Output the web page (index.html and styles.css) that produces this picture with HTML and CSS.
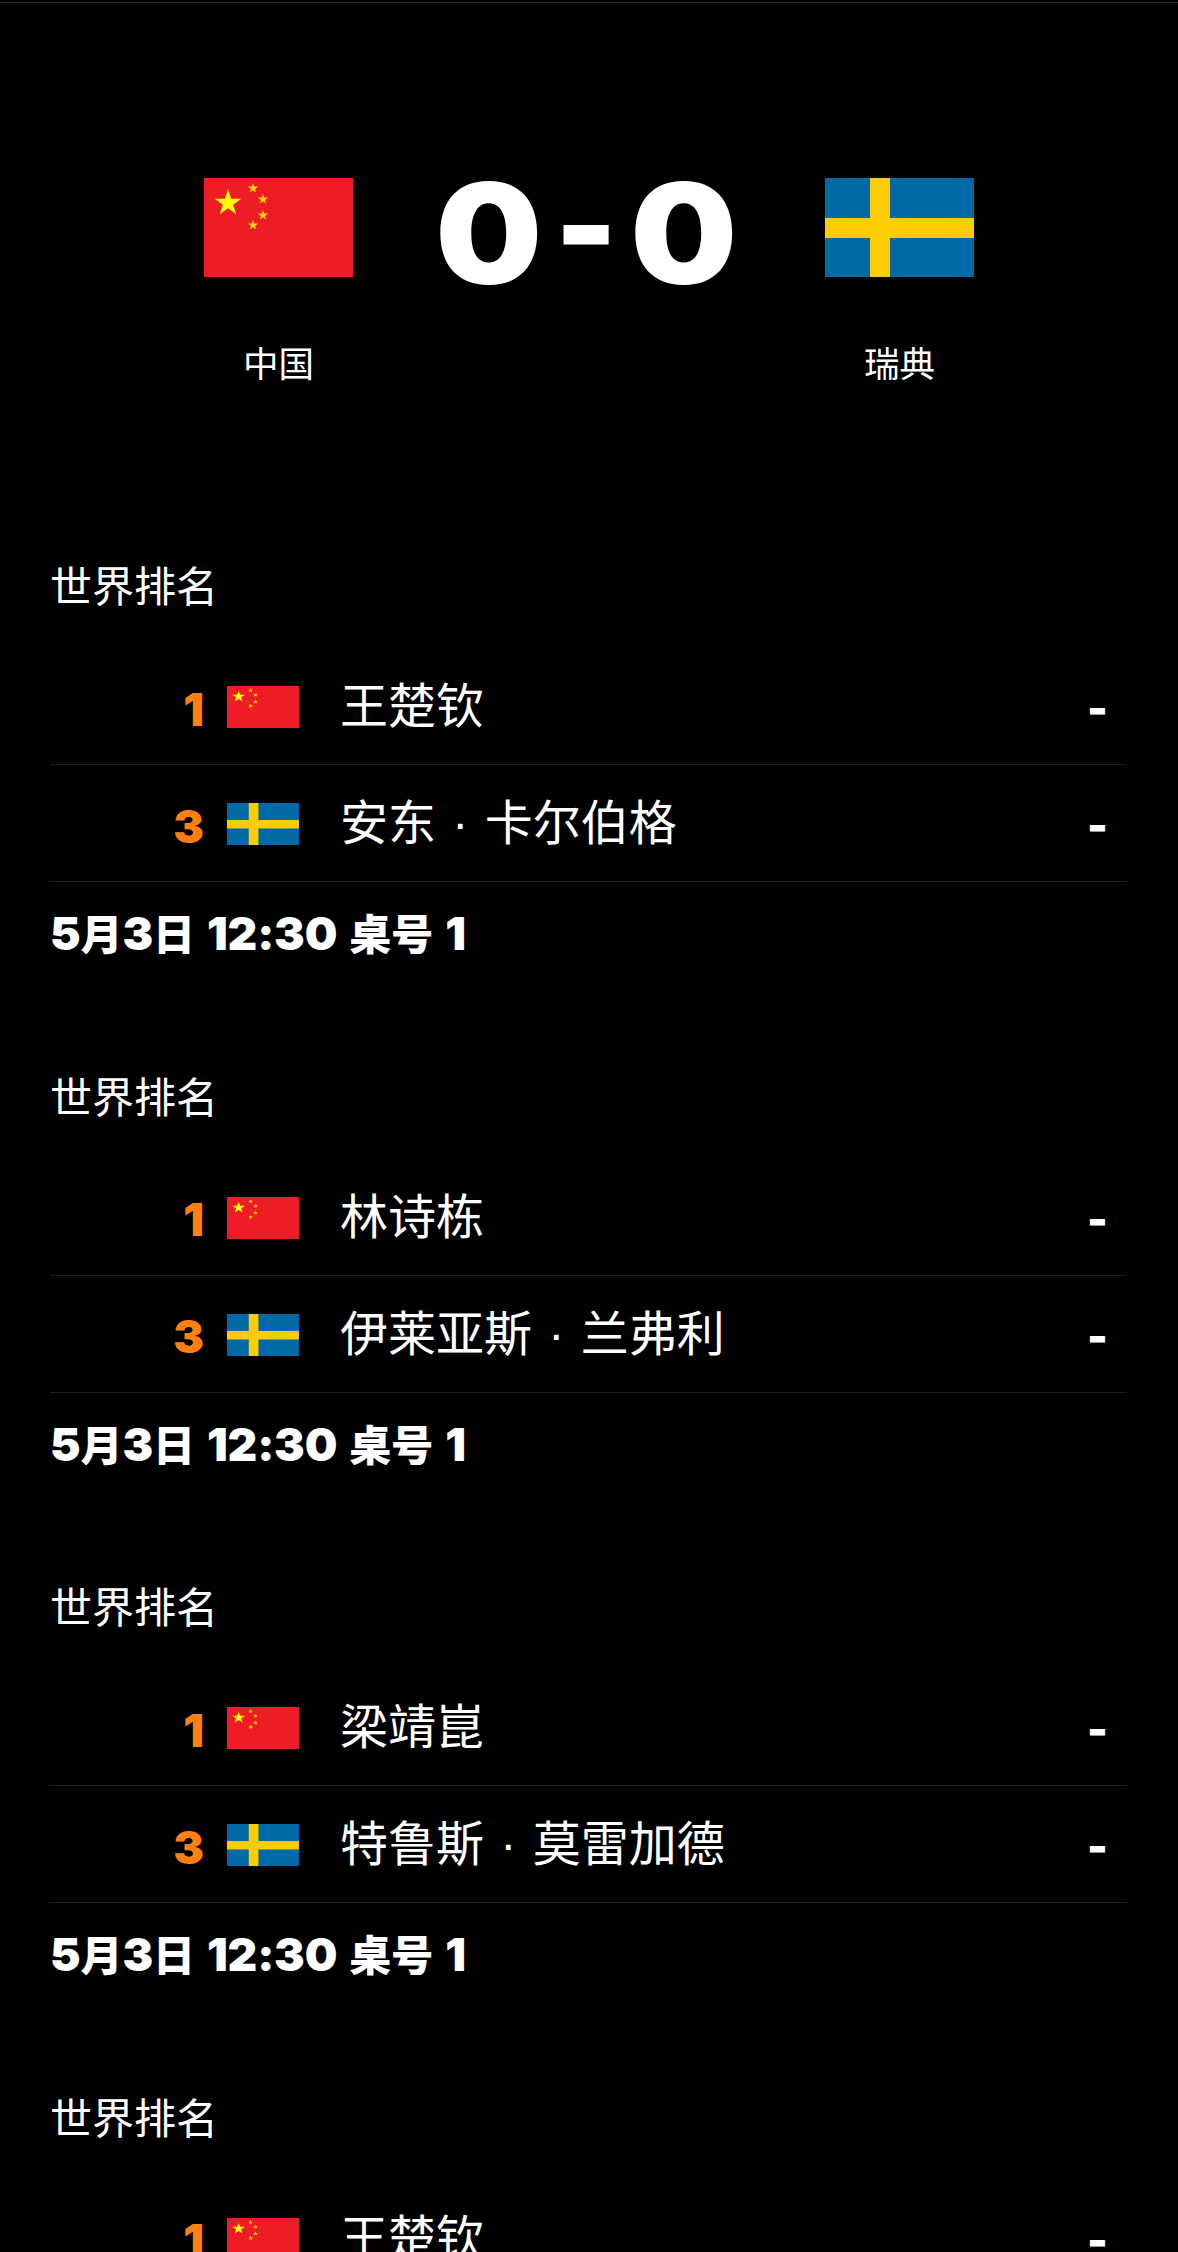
FILE: index.html
```html
<!DOCTYPE html>
<html lang="zh-CN">
<head>
<meta charset="utf-8">
<title>中国 0-0 瑞典</title>
<link rel="stylesheet" href="styles.css">
</head>
<body>
<svg class="defs" width="0" height="0" aria-hidden="true">
  <defs>
    <symbol id="flag-cn" viewBox="0 0 149 99" preserveAspectRatio="none">
      <rect width="149" height="99" fill="#ee1c25"/>
      <polygon fill="#ffff00" points="24,11 27.1,20.7 37.3,20.7 29.1,26.65 32.2,36.3 24,30.35 15.8,36.3 18.9,26.65 10.7,20.7 20.9,20.7"/>
      <g fill="#ffdd00">
        <polygon points="49,5 50.2,8.6 54,8.6 51,10.9 52.1,14.5 49,12.3 45.9,14.5 47,10.9 44,8.6 47.8,8.6"/>
        <polygon points="59,16 60.2,19.6 64,19.6 61,21.9 62.1,25.5 59,23.3 55.9,25.5 57,21.9 54,19.6 57.8,19.6"/>
        <polygon points="59,32 60.2,35.6 64,35.6 61,37.9 62.1,41.5 59,39.3 55.9,41.5 57,37.9 54,35.6 57.8,35.6"/>
        <polygon points="49,42 50.2,45.6 54,45.6 51,47.9 52.1,51.5 49,49.3 45.9,51.5 47,47.9 44,45.6 47.8,45.6"/>
      </g>
    </symbol>
    <symbol id="flag-se" viewBox="0 0 149 99" preserveAspectRatio="none">
      <rect width="149" height="99" fill="#006aa7"/>
      <rect x="45" width="20" height="99" fill="#fecc02"/>
      <rect y="40" width="149" height="20" fill="#fecc02"/>
    </symbol>
  </defs>
</svg>
<main class="page">
  <header class="score-head">
    <div class="team">
      <svg class="flag-large"><use href="#flag-cn"/></svg>
      <div class="team-name">中国</div>
    </div>
    <div class="score"><span class="score-digit">0</span><span class="score-dash">-</span><span class="score-digit">0</span></div>
    <div class="team">
      <svg class="flag-large"><use href="#flag-se"/></svg>
      <div class="team-name">瑞典</div>
    </div>
  </header>

  <section class="match">
    <h2 class="match-title">世界排名</h2>
    <div class="row">
      <span class="rank">1</span>
      <svg class="flag-small"><use href="#flag-cn"/></svg>
      <span class="player">王楚钦</span>
      <span class="result">-</span>
    </div>
    <div class="row">
      <span class="rank">3</span>
      <svg class="flag-small"><use href="#flag-se"/></svg>
      <span class="player">安东 · 卡尔伯格</span>
      <span class="result">-</span>
    </div>
    <p class="match-time">5<span class="zh">月</span>3<span class="zh">日</span> 12:30 <span class="zh">桌号</span> 1</p>
  </section>

  <section class="match">
    <h2 class="match-title">世界排名</h2>
    <div class="row">
      <span class="rank">1</span>
      <svg class="flag-small"><use href="#flag-cn"/></svg>
      <span class="player">林诗栋</span>
      <span class="result">-</span>
    </div>
    <div class="row">
      <span class="rank">3</span>
      <svg class="flag-small"><use href="#flag-se"/></svg>
      <span class="player">伊莱亚斯 · 兰弗利</span>
      <span class="result">-</span>
    </div>
    <p class="match-time">5<span class="zh">月</span>3<span class="zh">日</span> 12:30 <span class="zh">桌号</span> 1</p>
  </section>

  <section class="match">
    <h2 class="match-title">世界排名</h2>
    <div class="row">
      <span class="rank">1</span>
      <svg class="flag-small"><use href="#flag-cn"/></svg>
      <span class="player">梁靖崑</span>
      <span class="result">-</span>
    </div>
    <div class="row">
      <span class="rank">3</span>
      <svg class="flag-small"><use href="#flag-se"/></svg>
      <span class="player">特鲁斯 · 莫雷加德</span>
      <span class="result">-</span>
    </div>
    <p class="match-time">5<span class="zh">月</span>3<span class="zh">日</span> 12:30 <span class="zh">桌号</span> 1</p>
  </section>

  <section class="match">
    <h2 class="match-title">世界排名</h2>
    <div class="row">
      <span class="rank">1</span>
      <svg class="flag-small"><use href="#flag-cn"/></svg>
      <span class="player">王楚钦</span>
      <span class="result">-</span>
    </div>
  </section>
</main>
</body>
</html>
```

FILE: styles.css
```css
html, body {
  margin: 0;
  padding: 0;
  background: #000;
}

body {
  height: 2252px;
  overflow: hidden;
  color: #fff;
  font-family: Inter, "Noto Sans CJK SC", sans-serif;
}

.defs {
  display: block;
  height: 0;
}

.page {
  border-top: 1px solid #222;
  margin-top: 2px;
}

.score-head {
  display: flex;
  justify-content: space-between;
  align-items: flex-start;
  height: 553px;
  padding: 175px 204px 0;
  box-sizing: border-box;
}

.team {
  display: flex;
  flex-direction: column;
  align-items: center;
  width: 149px;
}

.flag-large {
  display: block;
  width: 149px;
  height: 99px;
}

.team-name {
  margin-top: 60px;
  font-size: 35.5px;
  line-height: 50px;
  font-weight: 400;
  font-family: "Noto Sans CJK SC", sans-serif;
}

.score {
  display: flex;
  align-items: flex-start;
  gap: 16.5px;
  font-size: 140px;
  font-weight: 900;
  line-height: 110px;
  margin-left: -6px;
}

.score-digit {
  transform: scaleX(1.075);
}

.score-dash {
  font-size: 132px;
  margin-top: -8px;
}

.match {
  padding: 0 51px 82.5px 50px;
}

.match-title {
  margin: 0 0 36px;
  font-size: 42px;
  line-height: 56px;
  font-weight: 400;
  font-family: "Noto Sans CJK SC", sans-serif;
}

.row {
  display: flex;
  align-items: center;
  height: 117px;
  box-sizing: border-box;
  padding-top: 2px;
  border-bottom: 1px solid #1f1f1f;
}

.rank {
  width: 154px;
  margin-top: 3px;
  text-align: right;
  color: #ff7f11;
  font-size: 46px;
  font-weight: 900;
  line-height: 1;
}

.flag-small {
  display: block;
  flex: none;
  width: 72px;
  height: 42px;
  margin-left: 23px;
}

.player {
  margin-left: 41px;
  font-size: 48px;
  line-height: 60px;
  font-weight: 400;
  word-spacing: 3px;
  font-family: "Liberation Sans", "Noto Sans CJK SC", sans-serif;
}

.result {
  margin-left: auto;
  margin-right: 19px;
  margin-top: 2px;
  font-size: 44px;
  font-weight: 900;
  line-height: 1;
}

.match-time {
  margin: 0;
  height: 102px;
  font-size: 46px;
  line-height: 102px;
  font-weight: 900;
  letter-spacing: -0.2px;
  word-spacing: 3px;
  font-family: Inter, "Noto Sans CJK SC", sans-serif;
}

.zh {
  font-size: 42px;
  letter-spacing: 0;
}
```
